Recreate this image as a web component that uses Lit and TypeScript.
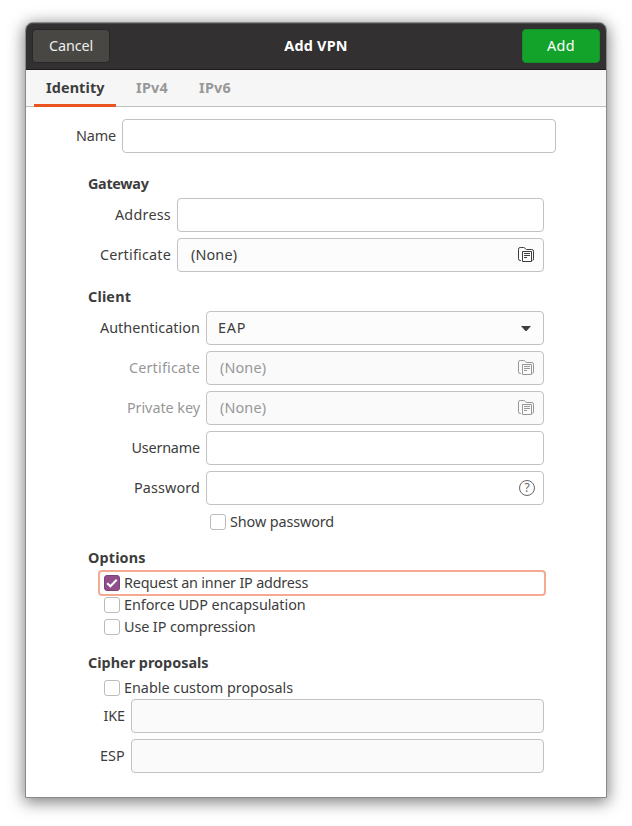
import { LitElement, html, css, svg, nothing } from "lit";
import { customElement, property } from "lit/decorators.js";
import { classMap } from "lit/directives/class-map.js";

/* A run of text tracked so that it spans the given width. */
@customElement("fit-text")
class FitText extends LitElement {
  @property() text = "";
  @property({ type: Number }) span = 0;

  static styles = css`
    :host { display: inline-block; white-space: pre; transform: translateY(-1px); }
    .t { display: inline-block; }
  `;

  updated() {
    const el = this.renderRoot.querySelector(".t") as HTMLElement;
    el.style.letterSpacing = "0";
    const natural = el.getBoundingClientRect().width;
    const gap = (this.span + 0.6 - natural) / this.text.length;
    el.style.letterSpacing = `${gap.toFixed(3)}px`;
  }

  render() {
    return html`<span class="t">${this.text}</span>`;
  }
}

const t = (text: string, span: number) =>
  html`<fit-text .text=${text} .span=${span}></fit-text>`;

const folder = svg`
  <path d="M3 13.5H2.2Q.5 13.5 .5 11.8V2.2Q.5.5 2.2.5H5.6Q6.5.5 7 1.2L7.6 2Q8 2.5 8.8 2.5H13.8Q15.5 2.5 15.5 4.2V11.8Q15.5 13.5 14.5 13.5" />
  <path d="M4.5 4.5H13.5V14.5H4.5Z" />
  <path d="M6 6.5H12M6 8.5H12M6 10.5H9" />`;

@customElement("app-root")
class AppRoot extends LitElement {
  static styles = css`
    :host {
      display: block;
      box-sizing: border-box;
      height: 826px;
      padding: 22px 25px 28px;
      background: #fff;
      color: #3d3d3d;
      font: 14.4px/17px "Noto Sans", "Open Sans", sans-serif;
      overflow: hidden;
    }
    * { box-sizing: border-box; }
    .window {
      height: 776px;
      border: 1px solid #8a8a8a;
      border-radius: 8px 8px 0 0;
      background: #fff;
      box-shadow: 0 3px 16px 1px rgba(0, 0, 0, 0.52);
    }
    .header {
      display: grid;
      grid-template-columns: 78px 1fr 78px;
      align-items: center;
      justify-items: center;
      height: 47px;
      padding: 0 6px;
      border-bottom: 1px solid #1d1c1c;
      border-radius: 7px 7px 0 0;
      background: #323030;
      box-shadow: inset 0 1px #4b4949;
      color: #fff;
    }
    .btn {
      display: flex;
      align-items: center;
      justify-content: center;
      border-radius: 4px;
    }
    .cancel {
      justify-self: start;
      width: 78px;
      height: 34px;
      border: 1px solid #282727;
      background: #484744;
      color: #eeeeec;
    }
    .add {
      width: 78px;
      height: 34px;
      border: 1px solid #129127;
      background: #14a32a;
    }
    .bold { font-weight: 700; }
    .tabs {
      display: flex;
      height: 37px;
      padding-left: 8px;
      border-bottom: 1px solid #bfbfbf;
      background: #f6f6f6;
      color: #989898;
      font-weight: 700;
    }
    .tab {
      display: flex;
      align-items: center;
      height: 37px;
      padding: 0 0 0 20px;
      width: 63px;
    }
    .tab.active {
      width: 82px;
      padding: 3px 0 0 12px;
      border-bottom: 3px solid #e95420;
      color: #3d3d3d;
    }
    .body { padding: 12px 62px 0; }
    .row { display: flex; align-items: center; gap: 6px; }
    .label { display: flex; justify-content: flex-end; }
    .name { margin: 0 -12px; }
    .name .label { width: 40px; }
    .section { padding-top: 17px; }
    .name + .section { padding-top: 23px; }
    .title { height: 17px; margin-bottom: 5px; font-weight: 700; }
    .fields { display: grid; gap: 6px; padding-left: 12px; }
    .gateway .label { width: 71px; }
    .client .label { width: 100px; }
    .cipher .label { width: 25px; }
    .field {
      flex: 1;
      display: flex;
      align-items: center;
      justify-content: space-between;
      height: 34px;
      padding: 0 9px 0 13px;
      border: 1px solid #c2c2c2;
      border-radius: 4px;
      background: #fff;
    }
    .field.combo { padding: 0 12px 0 11px; background: #fcfcfc; }
    .field.file { background: #fcfcfc; }
    .field.off { background: #fafafa; }
    .field.end { justify-content: flex-end; padding-right: 8px; }
    .dim { color: #979797; }
    .dim .field { background: #fafafa; }
    svg { display: block; fill: none; stroke: currentColor; }
    .caret { stroke: none; fill: currentColor; }
    .help {
      display: flex;
      align-items: center;
      justify-content: center;
      width: 16px;
      height: 16px;
      border: 1px solid #656565;
      border-radius: 50%;
      color: #656565;
      font-size: 12px;
      line-height: 14px;
    }
    .checks { padding-left: 12px; }
    .check {
      display: flex;
      align-items: center;
      gap: 4px;
      height: 22px;
      padding-left: 4px;
    }
    .show { margin: 0 0 0 106px; }
    .focused { border-radius: 2px; outline: 2px solid #f4aa90; }
    .box {
      display: flex;
      width: 16px;
      height: 16px;
      border: 1px solid #bcbcbc;
      border-radius: 3px;
      background: #fff;
    }
    .box.on { border-color: #7c4476; background: #924d8b; color: #fff; }
  `;

  check(label: string, span: number, on = false, extra = "") {
    return html`<div class="check ${extra}">
      <span class=${classMap({ box: true, on })}>
        ${on
          ? html`<svg width="14" height="14" stroke-width="2"><path d="M2.2 7.2L5.4 10.3L11.7 3.8" /></svg>`
          : nothing}
      </span>
      ${t(label, span)}
    </div>`;
  }

  row(label: string, span: number, kind = "", content: unknown = nothing, dim = false) {
    return html`<div class=${classMap({ row: true, dim })}>
      <div class="label">${t(label, span)}</div>
      <div class="field ${kind}">${content}</div>
    </div>`;
  }

  chooser() {
    return html`${t("(None)", 45.5)}<svg width="16" height="16">${folder}</svg>`;
  }

  render() {
    return html`<div class="window">
      <div class="header">
        <div class="btn cancel">${t("Cancel", 43.5)}</div>
        <div class="bold">${t("Add VPN", 63)}</div>
        <div class="btn add">${t("Add", 27.5)}</div>
      </div>
      <div class="tabs">
        <div class="tab active">${t("Identity", 58)}</div>
        <div class="tab">${t("IPv4", 31.5)}</div>
        <div class="tab">${t("IPv6", 31.5)}</div>
      </div>
      <div class="body">
        <div class="row name">
          <div class="label">${t("Name", 39.5)}</div>
          <div class="field"></div>
        </div>
        <div class="section gateway">
          <div class="title">${t("Gateway", 60)}</div>
          <div class="fields">
            ${this.row("Address", 55.5)}
            ${this.row("Certificate", 70.5, "file", this.chooser())}
          </div>
        </div>
        <div class="section client">
          <div class="title">${t("Client", 42.5)}</div>
          <div class="fields">
            ${this.row("Authentication", 99.5, "combo", html`${t("EAP", 27.5)}
              <svg class="caret" width="10" height="5"><path d="M0 0H10L6 4.4Q5 5.4 4 4.4Z" /></svg>`)}
            ${this.row("Certificate", 70.5, "file", this.chooser(), true)}
            ${this.row("Private key", 72.5, "file", this.chooser(), true)}
            ${this.row("Username", 68)}
            ${this.row("Password", 65.5, "end", html`<span class="help">?</span>`)}
            ${this.check("Show password", 103.5, false, "show")}
          </div>
        </div>
        <div class="section">
          <div class="title">${t("Options", 57)}</div>
          <div class="checks">
            ${this.check("Request an inner IP address", 183.5, true, "focused")}
            ${this.check("Enforce UDP encapsulation", 181)}
            ${this.check("Use IP compression", 131)}
          </div>
        </div>
        <div class="section">
          <div class="title">${t("Cipher proposals", 120)}</div>
          <div class="checks">${this.check("Enable custom proposals", 168.5)}</div>
          <div class="fields cipher">
            ${this.row("IKE", 21, "off")}
            ${this.row("ESP", 24.5, "off")}
          </div>
        </div>
      </div>
    </div>`;
  }
}
